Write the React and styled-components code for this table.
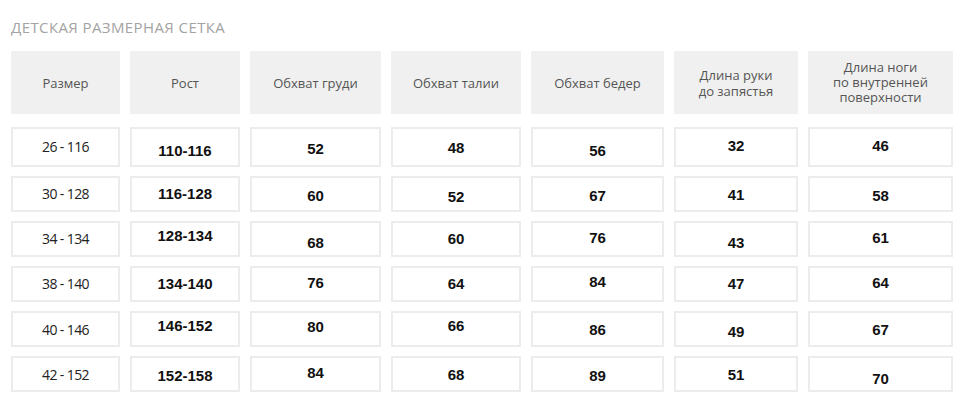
import React from 'react'
import styled, { createGlobalStyle } from 'styled-components'

const GlobalStyle = createGlobalStyle`
    body {
        margin: 0;
        background: #fff;
        font-family: "Open Sans", "Liberation Sans", sans-serif;
    }
`

const Page = styled.div`
    width: 960px;
    height: 405px;
    padding: 17px 0 0 11px;
    box-sizing: border-box;
    overflow: hidden;
`

const Title = styled.h2`
    margin: 0 0 14px 0;
    font-size: 15px;
    line-height: 20px;
    font-weight: 400;
    letter-spacing: 0.4px;
    color: #a3a3a3;
    text-transform: uppercase;
`

const Grid = styled.div`
    display: grid;
    grid-template-columns: 109px 110px 131px 130px 133px 124px 145px;
    column-gap: 10px;
`

const Head = styled(Grid)`
    grid-template-rows: 63px;
    margin-bottom: 13px;
`

const Body = styled(Grid)`
    grid-template-rows: 40px repeat(5, 36px);
    row-gap: 9px;
`

const HeadCell = styled.div`
    display: flex;
    align-items: center;
    justify-content: center;
    text-align: center;
    background: #f0f0f0;
    color: #555;
    font-size: 13px;
    line-height: ${props => props.$lh || 16}px;
`

const Cell = styled.div`
    display: flex;
    align-items: center;
    justify-content: center;
    box-sizing: border-box;
    border: 2px solid #ececec;
    background: #fff;
`

const Value = styled.span`
    transform: translateY(${props => props.$dy}px);
    font-family: ${props => props.$plain ? '"Open Sans", sans-serif' : '"Liberation Sans", Arial, sans-serif'};
    font-weight: ${props => props.$plain ? 400 : 700};
    font-size: ${props => props.$plain ? 14 : 15}px;
    color: ${props => props.$plain ? '#222' : '#111'};
    letter-spacing: ${props => props.$plain ? '-0.6px' : '0'};
`

const headers = [
    ['Размер'],
    ['Рост'],
    ['Обхват груди'],
    ['Обхват талии'],
    ['Обхват бедер'],
    ['Длина руки', 'до запястья'],
    ['Длина ноги', 'по внутренней', 'поверхности'],
]

const rows = [
    ['26 - 116', '110-116', '52', '48', '56', '32', '46'],
    ['30 - 128', '116-128', '60', '52', '67', '41', '58'],
    ['34 - 134', '128-134', '68', '60', '76', '43', '61'],
    ['38 - 140', '134-140', '76', '64', '84', '47', '64'],
    ['40 - 146', '146-152', '80', '66', '86', '49', '67'],
    ['42 - 152', '152-158', '84', '68', '89', '51', '70'],
]

// vertical drift of each value inside its cell, as in the source picture
const shifts = [
    [-1, 3, 1, 0, 3, -2, -2],
    [-1, -1, 1, 2, 1, 0, 1],
    [-1, -4, 3, -1, -2, 3, -2],
    [-1, -1, -2, -1, -3, -1, -2],
    [0, -4, -3, -4, 0, 2, 0],
    [0, 1, -2, 0, 1, 0, 4],
]

export default function App() {
    return (
        <>
            <GlobalStyle />
            <Page>
                <Title>Детская размерная сетка</Title>
                <Head>
                    {headers.map((lines, i) => (
                        <HeadCell key={i} $lh={lines.length > 2 ? 15 : 16}>
                            <div>
                                {lines.map((l, j) => <div key={j}>{l}</div>)}
                            </div>
                        </HeadCell>
                    ))}
                </Head>
                <Body>
                    {rows.map((row, r) =>
                        row.map((v, c) => (
                            <Cell key={r + '-' + c}>
                                <Value $plain={c === 0} $dy={shifts[r][c]}>{v}</Value>
                            </Cell>
                        ))
                    )}
                </Body>
            </Page>
        </>
    )
}
